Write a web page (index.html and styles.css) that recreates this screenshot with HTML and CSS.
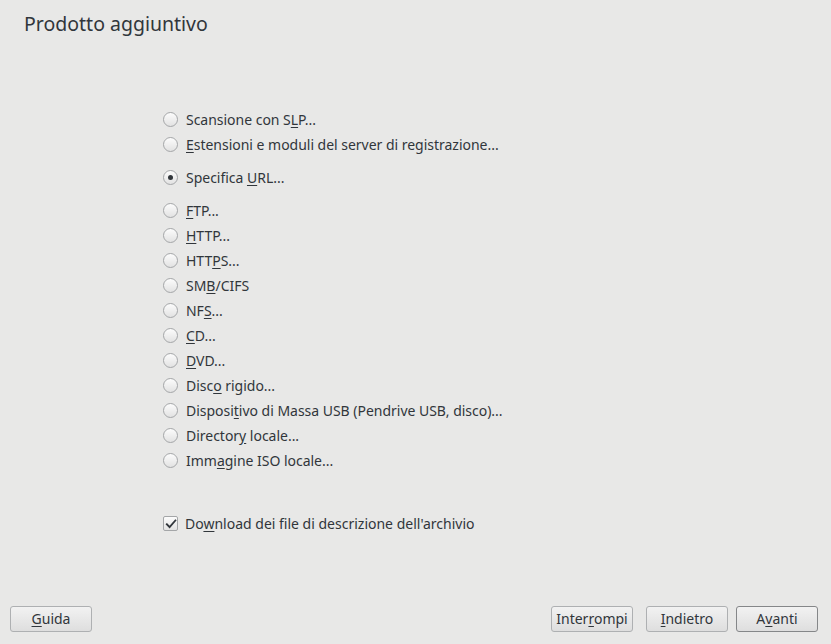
FILE: index.html
```html
<!DOCTYPE html>
<html>
<head>
<meta charset="utf-8">
<link rel="stylesheet" href="styles.css">
</head>
<body>
<div class="page">
  <h1 class="title">Prodotto aggiuntivo</h1>
  <div class="content">
    <div class="options">
      <div class="group">
        <label class="radio"><span class="dot"></span><span>Scansione con S<u>L</u>P...</span></label>
        <label class="radio"><span class="dot"></span><span><u>E</u>stensioni e moduli del server di registrazione...</span></label>
      </div>
      <div class="group">
        <label class="radio checked"><span class="dot"></span><span>Specifica <u>U</u>RL...</span></label>
      </div>
      <div class="group">
        <label class="radio"><span class="dot"></span><span><u>F</u>TP...</span></label>
        <label class="radio"><span class="dot"></span><span><u>H</u>TTP...</span></label>
        <label class="radio"><span class="dot"></span><span>HTT<u>P</u>S...</span></label>
        <label class="radio"><span class="dot"></span><span>SM<u>B</u>/CIFS</span></label>
        <label class="radio"><span class="dot"></span><span>NF<u>S</u>...</span></label>
        <label class="radio"><span class="dot"></span><span><u>C</u>D...</span></label>
        <label class="radio"><span class="dot"></span><span><u>D</u>VD...</span></label>
        <label class="radio"><span class="dot"></span><span>Disc<u>o</u> rigido...</span></label>
        <label class="radio"><span class="dot"></span><span>Disposi<u>t</u>ivo di Massa USB (Pendrive USB, disco)...</span></label>
        <label class="radio"><span class="dot"></span><span>Director<u>y</u> locale...</span></label>
        <label class="radio"><span class="dot"></span><span>Imm<u>a</u>gine ISO locale...</span></label>
      </div>
      <label class="check"><span class="box"><svg width="12" height="12" viewBox="0 0 12 12"><path d="M1.8 6.2 L4.6 9.2 L10.4 2.4" fill="none" stroke="#31363b" stroke-width="1.8" stroke-linecap="square"/></svg></span><span>Do<u>w</u>nload dei file di descrizione dell'archivio</span></label>
    </div>
  </div>
  <div class="buttons">
    <button class="btn"><u>G</u>uida</button>
    <div class="spacer"></div>
    <button class="btn">Inter<u>r</u>ompi</button>
    <button class="btn gap13"><u>I</u>ndietro</button>
    <button class="btn default gap8">A<u>v</u>anti</button>
  </div>
</div>
</body>
</html>
```
FILE: styles.css
```css
html, body {
  margin: 0;
  padding: 0;
  background: #e8e8e7;
}
body {
  font-family: "Noto Sans", "Open Sans", sans-serif;
  color: #31363b;
}
.page {
  width: 831px;
  height: 644px;
  display: flex;
  flex-direction: column;
  box-sizing: border-box;
}
.title {
  margin: 0;
  padding: 11px 0 0 24px;
  font-size: 19.5px;
  font-weight: normal;
  line-height: 26px;
  color: #31363b;
}
.content {
  flex: 1;
  padding: 70px 0 0 163px;
}
.options {
  display: flex;
  flex-direction: column;
}
.group {
  display: flex;
  flex-direction: column;
  margin-bottom: 8px;
}
.group:last-of-type {
  margin-bottom: 38px;
}
.radio, .check {
  display: flex;
  align-items: center;
  height: 25px;
  font-size: 14px;
  white-space: nowrap;
}
.radio {
  letter-spacing: -0.02px;
}
u {
  text-decoration: underline;
  text-underline-offset: 2px;
}
.dot {
  width: 15px;
  height: 15px;
  box-sizing: border-box;
  border: 1px solid #a4a6a8;
  border-radius: 50%;
  background: linear-gradient(#fcfcfc, #e2e2e2);
  margin: 0 8px 0 0;
  position: relative;
  flex: none;
}
.checked .dot::after {
  content: "";
  position: absolute;
  left: 4px;
  top: 4px;
  width: 5px;
  height: 5px;
  border-radius: 50%;
  background: #31363b;
}
.box {
  width: 15px;
  height: 15px;
  box-sizing: border-box;
  border: 1px solid #a4a6a8;
  border-radius: 2px;
  background: linear-gradient(#fcfcfc, #e2e2e2);
  margin: 0 7px 0 0;
  display: flex;
  align-items: center;
  justify-content: center;
  flex: none;
}
.buttons {
  display: flex;
  align-items: center;
  padding: 0 13px 12px 10px;
}
.spacer {
  flex: 1;
}
.btn {
  width: 82px;
  height: 26px;
  box-sizing: border-box;
  font-family: "Noto Sans", "Open Sans", sans-serif;
  font-size: 14px;
  color: #31363b;
  border: 1px solid #aeb0b2;
  border-radius: 3px;
  background: linear-gradient(#f2f2f2, #dedede);
  padding: 0;
  line-height: 22px;
}
.gap13 {
  margin-left: 13px;
}
.gap8 {
  margin-left: 8px;
}
.default {
  border-color: #858789;
}
```
